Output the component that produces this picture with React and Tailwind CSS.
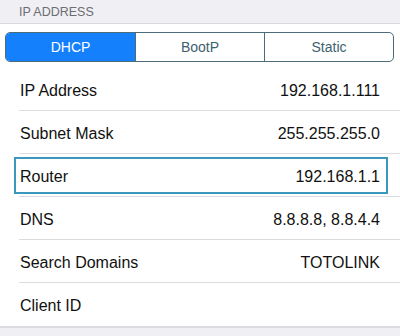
import React from 'react';

const rows = [
  { label: 'IP Address', value: '192.168.1.111' },
  { label: 'Subnet Mask', value: '255.255.255.0' },
  { label: 'Router', value: '192.168.1.1', highlight: true },
  { label: 'DNS', value: '8.8.8.8, 8.8.4.4' },
  { label: 'Search Domains', value: 'TOTOLINK' },
  { label: 'Client ID', value: '' },
];

const segments = ['DHCP', 'BootP', 'Static'];

const App = () => {
  return (
    <div
      className="w-[400px] h-[336px] bg-[#efeff4] overflow-hidden"
      style={{ fontFamily: '"Liberation Sans", Arial, sans-serif' }}
    >
      <div className="h-[23px] flex items-center pl-[19px] pt-px text-[12.5px] text-[#6d6d72]">
        IP ADDRESS
      </div>
      <div className="bg-white border-t border-[#d9d9de]">
        <div className="pt-[8px] pb-[6px] pl-[5px] pr-[6px]">
          <div className="grid grid-cols-3 h-[30px] rounded-[5px] border border-[#4d6c79] overflow-hidden text-[14px]">
            {segments.map((s, i) => (
              <div
                key={s}
                className={
                  i === 0
                    ? 'flex items-center justify-center pt-px bg-[#1580fb] text-white'
                    : 'flex items-center justify-center pt-px text-[#3d6170] border-l border-[#4d6c79]'
                }
              >
                {s}
              </div>
            ))}
          </div>
        </div>
        {rows.map((row, i) => (
          <div key={row.label} className="relative h-[43px] pl-[19px]">
            <div
              className={
                'h-full flex items-center justify-between pl-px pr-5 pt-[3px] text-[16px] text-[#111] ' +
                (i < rows.length - 1 ? 'border-b border-[#dcdce0]' : '')
              }
            >
              <span>{row.label}</span>
              <span>{row.value}</span>
            </div>
            {row.highlight && (
              <div className="absolute left-[14px] right-[12px] top-[3px] bottom-[3px] border-2 border-[#3a98bd]" />
            )}
          </div>
        ))}
        <div className="h-[2px] bg-[#dcdce0]" />
      </div>
    </div>
  );
};

export default App;
